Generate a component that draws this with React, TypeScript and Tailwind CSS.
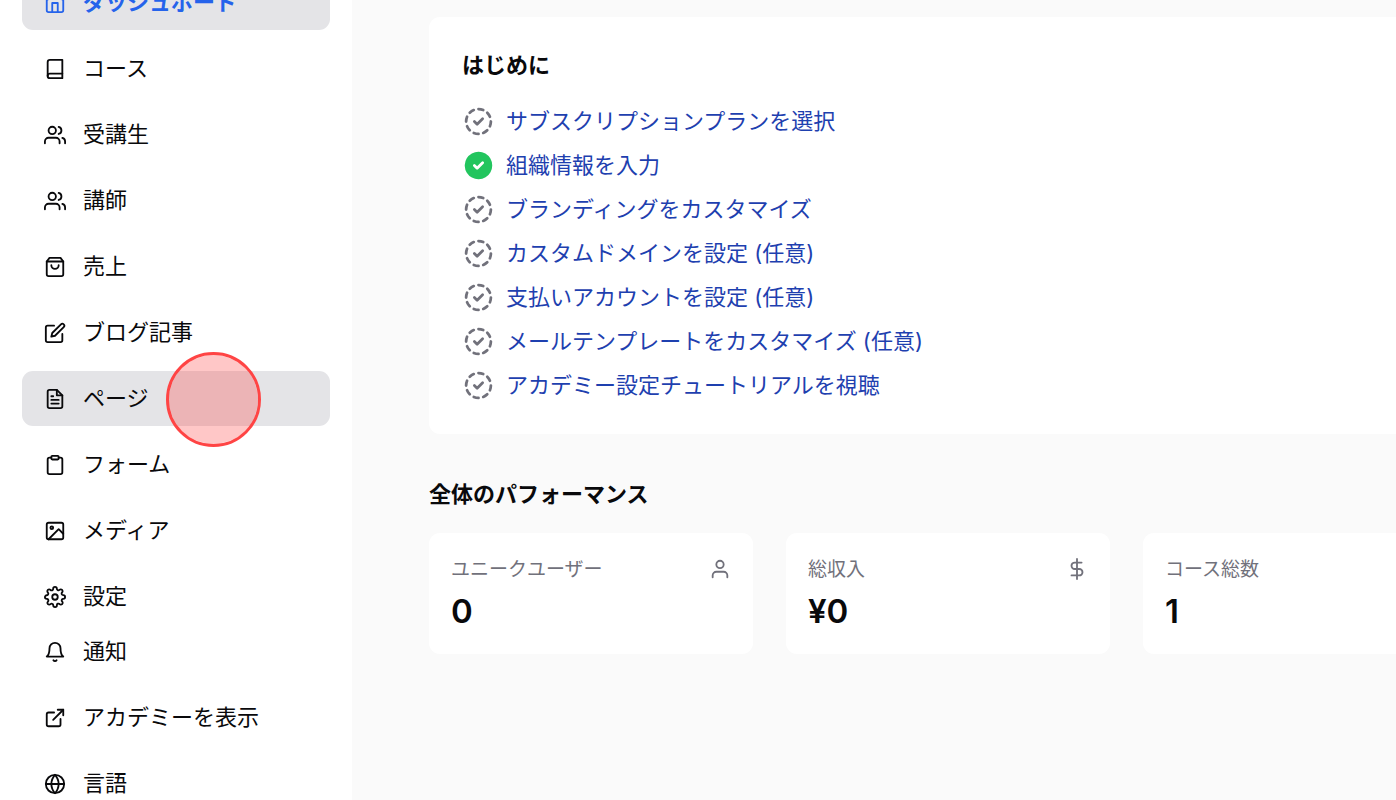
import React from 'react';
import type { IconType } from 'react-icons';
import {
  FiBell, FiBook, FiClipboard, FiDollarSign, FiEdit, FiExternalLink, FiFileText,
  FiGlobe, FiHome, FiImage, FiSettings, FiShoppingBag, FiUser, FiUsers,
} from 'react-icons/fi';
import { TbCircleCheckFilled, TbCircleDashedCheck } from 'react-icons/tb';

interface NavEntry {
  label: string;
  icon: IconType;
  current?: boolean;
  hovered?: boolean;
}

const mainNav: NavEntry[] = [
  { label: 'ダッシュボード', icon: FiHome, current: true },
  { label: 'コース', icon: FiBook },
  { label: '受講生', icon: FiUsers },
  { label: '講師', icon: FiUsers },
  { label: '売上', icon: FiShoppingBag },
  { label: 'ブログ記事', icon: FiEdit },
  { label: 'ページ', icon: FiFileText, hovered: true },
  { label: 'フォーム', icon: FiClipboard },
  { label: 'メディア', icon: FiImage },
  { label: '設定', icon: FiSettings },
];

const footerNav: NavEntry[] = [
  { label: '通知', icon: FiBell },
  { label: 'アカデミーを表示', icon: FiExternalLink },
  { label: '言語', icon: FiGlobe },
];

const steps = [
  { label: 'サブスクリプションプランを選択', done: false },
  { label: '組織情報を入力', done: true },
  { label: 'ブランディングをカスタマイズ', done: false },
  { label: 'カスタムドメインを設定 (任意)', done: false },
  { label: '支払いアカウントを設定 (任意)', done: false },
  { label: 'メールテンプレートをカスタマイズ (任意)', done: false },
  { label: 'アカデミー設定チュートリアルを視聴', done: false },
];

const stats: { label: string; value: string; icon?: IconType }[] = [
  { label: 'ユニークユーザー', value: '0', icon: FiUser },
  { label: '総収入', value: '¥0', icon: FiDollarSign },
  { label: 'コース総数', value: '1' },
];

const NavList: React.FC<{ items: NavEntry[] }> = ({ items }) => (
  <ul className="flex flex-col gap-[11px]">
    {items.map(({ label, icon: Icon, current, hovered }) => (
      <li key={label} className="relative">
        <a
          href="#"
          className={`flex h-[55px] items-center gap-[17px] rounded-[11px] px-[22px] ${
            current ? 'bg-zinc-200 font-semibold text-[#2563eb]' : hovered ? 'bg-zinc-200' : ''
          }`}
        >
          <Icon className="size-[22px] shrink-0" />
          <span>{label}</span>
        </a>
        {/* click marker */}
        {hovered && (
          <span className="pointer-events-none absolute -top-[19px] left-[144px] z-10 size-[95px] rounded-full border-3 border-[#ff4444] bg-[#ff4444]/30 bg-clip-padding" />
        )}
      </li>
    ))}
  </ul>
);

const GettingStarted: React.FC = () => (
  <section className="rounded-[11px] bg-white px-[33px] pt-[33px] pb-8">
    <h2 className="mb-[25px] leading-[30px] font-semibold">はじめに</h2>
    <ul className="flex flex-col gap-[11px]">
      {steps.map(({ label, done }) => (
        <li key={label}>
          <a href="#" className="flex items-center gap-[11px] leading-[33px] text-[#1e40af]">
            {done ? (
              <TbCircleCheckFilled className="size-[33px] text-[#22c55e]" />
            ) : (
              <TbCircleDashedCheck className="size-[33px] text-zinc-500" />
            )}
            {label}
          </a>
        </li>
      ))}
    </ul>
  </section>
);

const Performance: React.FC = () => (
  <section className="mt-11">
    <h2 className="mb-[22px] leading-[33px] font-semibold">全体のパフォーマンス</h2>
    <div className="grid grid-cols-3 gap-[33px]">
      {stats.map(({ label, value, icon: Icon }) => (
        <div key={label} className="rounded-[11px] bg-white px-[22px] pt-[22px] pb-[21px]">
          <div className="mb-1 flex items-start justify-between">
            <h3 className="text-[19px] leading-[30px] text-zinc-500">{label}</h3>
            {Icon && <Icon className="mt-[3px] size-[22px] text-zinc-500" />}
          </div>
          <p className="text-[33px] leading-11 font-semibold">{value}</p>
        </div>
      ))}
    </div>
  </section>
);

const App: React.FC = () => (
  <div className="flex h-screen overflow-hidden bg-zinc-50 font-['Inter','Noto_Sans_CJK_JP',sans-serif] text-[22px] text-zinc-950">
    <aside className="w-[352px] shrink-0 bg-white px-[22px]">
      {/* sidebar is scrolled partway past its first item */}
      <nav className="-mt-[25px]">
        <NavList items={mainNav} />
        <NavList items={footerNav} />
      </nav>
    </aside>
    <main className="min-w-0 flex-1 overflow-hidden pt-[17px] pl-[77px]">
      <div className="-mr-[71px]">
        <GettingStarted />
        <Performance />
      </div>
    </main>
  </div>
);

export default App;
